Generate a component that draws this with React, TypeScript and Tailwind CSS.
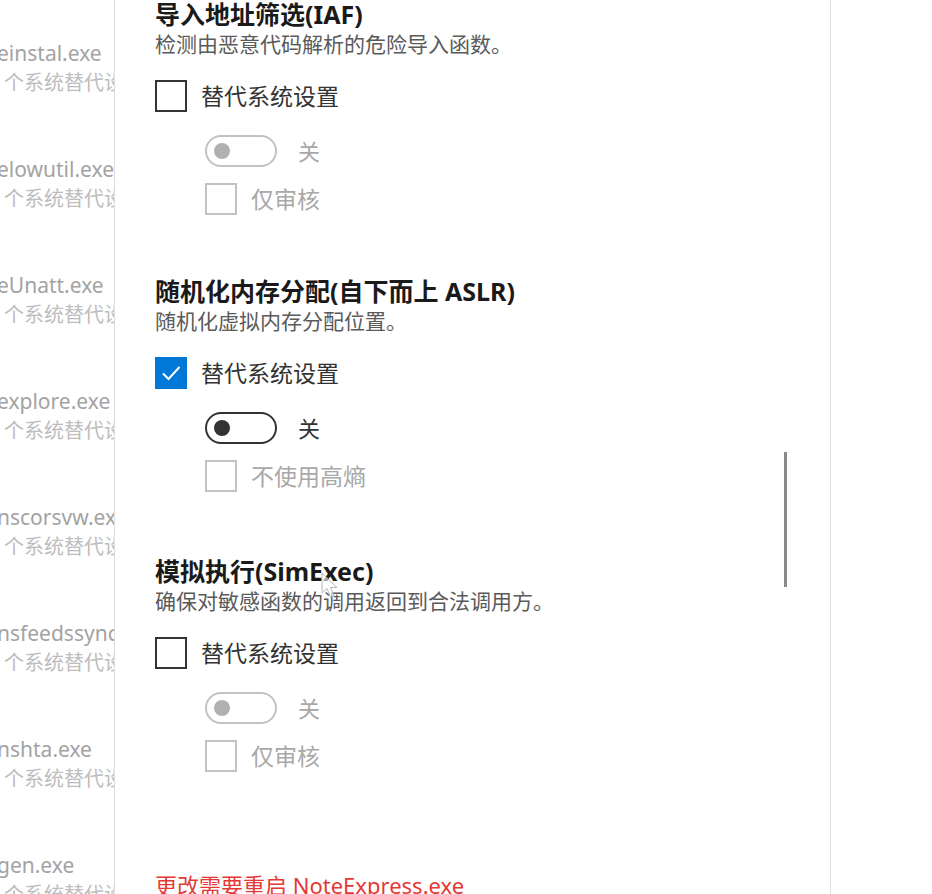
import React from "react";

const apps = [
  "einstal.exe",
  "elowutil.exe",
  "eUnatt.exe",
  "explore.exe",
  "nscorsvw.exe",
  "nsfeedssync.exe",
  "nshta.exe",
  "gen.exe",
];

function CheckBox({ state }: { state: "on" | "off" | "disabled" }) {
  if (state === "on") {
    return (
      <div className="flex h-[32px] w-[32px] shrink-0 items-center justify-center bg-[#0078d7]">
        <svg width="22" height="22" viewBox="0 0 22 22" fill="none">
          <path d="M3 11.5 L8.5 17 L19.5 5" stroke="white" strokeWidth="2" />
        </svg>
      </div>
    );
  }
  return (
    <div
      className={`h-[32px] w-[32px] shrink-0 border-2 ${
        state === "off" ? "border-[#333333]" : "border-[#c2c2c2]"
      }`}
    />
  );
}

function Toggle({ enabled }: { enabled: boolean }) {
  return (
    <div className="flex items-center gap-[21px]">
      <div
        className={`flex h-[32px] w-[72px] items-center rounded-full border-2 pl-[7px] ${
          enabled ? "border-[#333333]" : "border-[#c2c2c2]"
        }`}
      >
        <div
          className={`h-[16px] w-[16px] rounded-full ${
            enabled ? "bg-[#333333]" : "bg-[#b0b0b0]"
          }`}
        />
      </div>
      <span
        className={`text-[22px] leading-[32px] ${
          enabled ? "text-[#333333]" : "text-[#a8a8a8]"
        }`}
      >
        关
      </span>
    </div>
  );
}

type Section = {
  title: string;
  desc: string;
  checked: boolean;
  sub: string;
  gap: string;
};

const sections: Section[] = [
  {
    title: "导入地址筛选(IAF)",
    desc: "检测由恶意代码解析的危险导入函数。",
    checked: false,
    sub: "仅审核",
    gap: "mt-[-2px]",
  },
  {
    title: "随机化内存分配(自下而上 ASLR)",
    desc: "随机化虚拟内存分配位置。",
    checked: true,
    sub: "不使用高熵",
    gap: "mt-[60px]",
  },
  {
    title: "模拟执行(SimExec)",
    desc: "确保对敏感函数的调用返回到合法调用方。",
    checked: false,
    sub: "仅审核",
    gap: "mt-[63px]",
  },
];

export default function App() {
  return (
    <div
      className="flex h-[894px] w-[932px] overflow-hidden bg-white"
      style={{ fontFamily: '"Noto Sans", "Noto Sans CJK SC", sans-serif' }}
    >
      {/* background app list */}
      <div className="w-[114px] shrink-0 overflow-hidden pt-[38px]">
        <div className="flex flex-col gap-[56px]">
          {apps.map((name) => (
            <div key={name} className="whitespace-nowrap">
              <div className="ml-[-3px] h-[30px] text-[21px] leading-[30px] text-[#a3a3a3]">
                {name}
              </div>
              <div className="pl-[4px] h-[30px] text-[20px] leading-[30px] text-[#bdbdbd]">
                个系统替代设置
              </div>
            </div>
          ))}
        </div>
      </div>

      {/* settings panel */}
      <div className="relative w-[717px] shrink-0 border-x border-[#dedede] bg-white pl-[40px]">
        {sections.map((s) => (
          <div key={s.title} className={`flex flex-col ${s.gap}`}>
            <div className="h-[32px] whitespace-nowrap text-[25px] font-bold leading-[32px] text-[#1a1a1a]">
              {s.title}
            </div>
            <div className="h-[28px] whitespace-nowrap text-[21px] leading-[28px] text-[#5a5a5a]">
              {s.desc}
            </div>
            <div className="mt-[22px] flex items-center gap-[14px]">
              <CheckBox state={s.checked ? "on" : "off"} />
              <span className="text-[23px] leading-[32px] text-[#333333]">
                替代系统设置
              </span>
            </div>
            <div className="ml-[50px] mt-[23px]">
              <Toggle enabled={s.checked} />
            </div>
            <div className="ml-[50px] mt-[16px] flex items-center gap-[14px]">
              <CheckBox state="disabled" />
              <span className="text-[23px] leading-[32px] text-[#a8a8a8]">
                {s.sub}
              </span>
            </div>
          </div>
        ))}
        <div className="mt-[99px] whitespace-nowrap text-[22px] leading-[28px] text-[#e53935]">
          更改需要重启 NoteExpress.exe
        </div>

        {/* scrollbar thumb */}
        <div className="absolute left-[669px] top-[452px] h-[135px] w-[3px] bg-[#8a8a8a]" />

        {/* mouse pointer */}
        <svg
          className="absolute left-[206px] top-[572px]"
          width="20"
          height="28"
          viewBox="0 0 20 28"
        >
          <path
            d="M1 1 L1 21 L6 16.5 L9.5 25 L13 23.5 L9.5 15.5 L16 15.5 Z"
            fill="rgba(255,255,255,0.6)"
            stroke="#b8b8b8"
            strokeWidth="1"
          />
        </svg>
      </div>
      <div className="flex-1 bg-white" />
    </div>
  );
}
